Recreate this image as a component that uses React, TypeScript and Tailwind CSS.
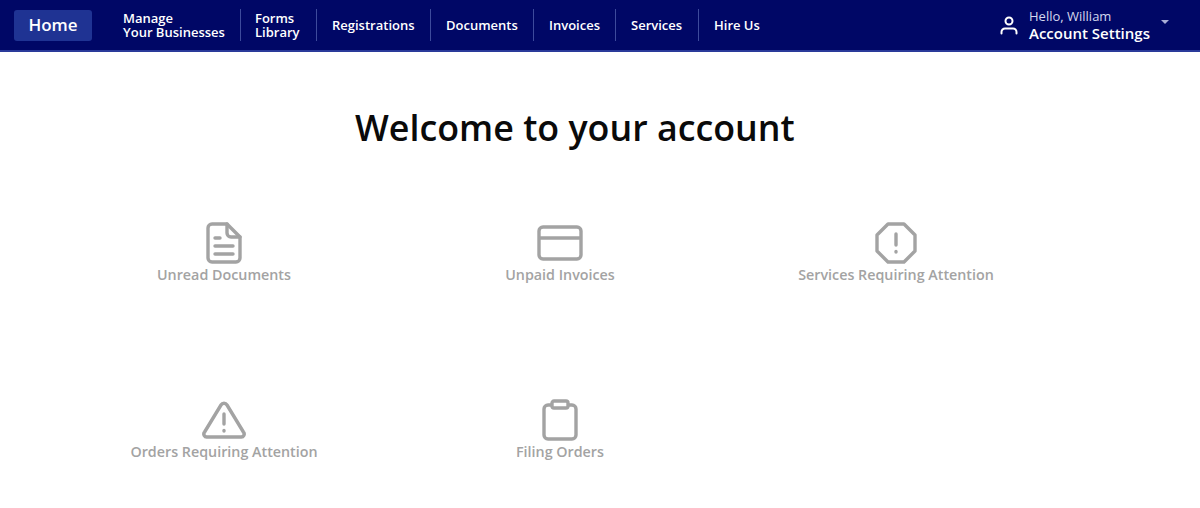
const navItems = [
  { label: ["Manage", "Your Businesses"], width: "w-[133px] pl-[15px]" },
  { label: ["Forms", "Library"], width: "w-[76px] pl-[14px]" },
  { label: ["Registrations"], width: "w-[114px] pl-[15px]" },
  { label: ["Documents"], width: "w-[103px] pl-[15px]" },
  { label: ["Invoices"], width: "w-[82px] pl-[15px]" },
  { label: ["Services"], width: "w-[83px] pl-[15px]" },
  { label: ["Hire Us"], width: "w-[76px] pl-[15px]" },
];

function DocIcon() {
  return (
    <svg width="36" height="42" viewBox="0 0 36 42" fill="none" stroke="#a3a3a3" strokeWidth="3.4" strokeLinecap="round" strokeLinejoin="round">
      <path d="M6 2h15l13 13v21a4 4 0 0 1-4 4H6a4 4 0 0 1-4-4V6a4 4 0 0 1 4-4z" />
      <path d="M21 2v9a4 4 0 0 0 4 4h9" />
      <path d="M9 16h5M9 24h18M9 32h18" />
    </svg>
  );
}

function CardIcon() {
  return (
    <svg width="46" height="36" viewBox="0 0 46 36" fill="none" stroke="#a3a3a3" strokeWidth="3.4" strokeLinejoin="round">
      <rect x="2" y="2" width="42" height="32" rx="4" />
      <path d="M2 13h42" />
    </svg>
  );
}

function OctagonIcon() {
  return (
    <svg width="42" height="42" viewBox="0 0 42 42" fill="none" stroke="#a3a3a3" strokeWidth="3.4" strokeLinecap="round" strokeLinejoin="round">
      <path d="M13 2h16l11 11v16L29 40H13L2 29V13z" />
      <path d="M21 12v11" />
      <path d="M21 29.5v.5" />
    </svg>
  );
}

function TriangleIcon() {
  return (
    <svg width="44" height="38" viewBox="0 0 44 38" fill="none" stroke="#a3a3a3" strokeWidth="3.4" strokeLinecap="round" strokeLinejoin="round">
      <path d="M19 4 2.6 31a3 3 0 0 0 2.6 5h33.6a3 3 0 0 0 2.6-5L25 4a3.5 3.5 0 0 0-6 0z" />
      <path d="M22 13v10" />
      <path d="M22 29.5v.5" />
    </svg>
  );
}

function ClipboardIcon() {
  return (
    <svg width="36" height="42" viewBox="0 0 36 42" fill="none" stroke="#a3a3a3" strokeWidth="3.4" strokeLinejoin="round">
      <path d="M10 6H6a4 4 0 0 0-4 4v26a4 4 0 0 0 4 4h24a4 4 0 0 0 4-4V10a4 4 0 0 0-4-4h-4" />
      <rect x="10" y="2" width="16" height="7" rx="2" />
    </svg>
  );
}

const tiles = [
  { label: "Unread Documents", icon: <DocIcon /> },
  { label: "Unpaid Invoices", icon: <CardIcon /> },
  { label: "Services Requiring Attention", icon: <OctagonIcon /> },
  { label: "Orders Requiring Attention", icon: <TriangleIcon /> },
  { label: "Filing Orders", icon: <ClipboardIcon /> },
];

export default function App() {
  return (
    <div className="h-[508px] w-[1200px] overflow-hidden bg-white font-['Open_Sans',sans-serif]">
      <header className="flex h-[52px] items-center border-b-2 border-[#2a3a9a] bg-[#000766] pl-[14px] text-white">
        <button className="flex h-[31px] w-[78px] items-center justify-center rounded-[3px] bg-[#1f3393] text-[17px] font-semibold">
          Home
        </button>
        <nav className="ml-[16px] flex items-center">
          {navItems.map((item, i) => (
            <div
              key={item.label[0]}
              className={`flex h-[32px] items-center text-[13px] font-semibold leading-[14px] ${item.width} ${
                i < navItems.length - 1 ? "border-r border-[#3d4a9c]" : ""
              }`}
            >
              <span>
                {item.label.map((line) => (
                  <span key={line} className="block whitespace-nowrap">
                    {line}
                  </span>
                ))}
              </span>
            </div>
          ))}
        </nav>
        <div className="ml-auto flex items-center pr-[31px]">
          <svg width="18" height="20" viewBox="0 0 18 20" fill="none" stroke="white" strokeWidth="2" strokeLinecap="round">
            <circle cx="9" cy="6" r="3.5" />
            <path d="M1.5 18.5v-1.5a3.5 3.5 0 0 1 3.5-3.5h8a3.5 3.5 0 0 1 3.5 3.5v1.5" />
          </svg>
          <div className="ml-[11px] w-[132px]">
            <div className="text-[13px] leading-[16px] text-[#d5d8ee]">Hello, William</div>
            <div className="text-[15px] font-semibold leading-[18px]">Account Settings</div>
          </div>
          <span className="mb-[6px] h-0 w-0 border-x-[4px] border-t-[4px] border-x-transparent border-t-[#a9aed6]" />
        </div>
      </header>

      <main className="px-[56px]">
        <h1 className="mt-[50px] pl-[299px] text-[35.8px] font-semibold leading-[50px] text-[#0a0a0a]">
          Welcome to your account
        </h1>
        <div className="mt-[70px] grid w-[1008px] grid-cols-3 auto-rows-[177px]">
          {tiles.map((tile) => (
            <div key={tile.label} className="flex flex-col items-center">
              <div className="flex h-[42px] items-center justify-center">{tile.icon}</div>
              <div className="mt-[1px] text-[14.3px] font-semibold leading-[20px] text-[#a3a3a3]">{tile.label}</div>
            </div>
          ))}
        </div>
      </main>
    </div>
  );
}
